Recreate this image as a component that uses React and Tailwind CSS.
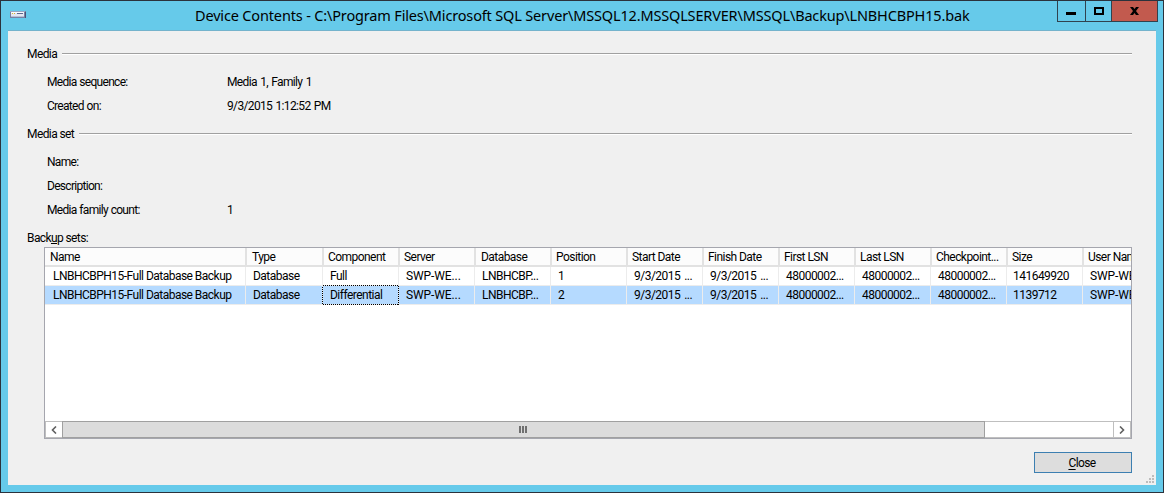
const columns = [
  { name: 'Name', width: 'w-[201px]', header: 'w-[202px] pl-[5px]', cell: 'pl-2' },
  { name: 'Type', width: 'w-[77px]', header: 'w-[77px] pl-[5px]', cell: 'pl-[7px]' },
  { name: 'Component', width: 'w-[76px]', header: 'w-[76px] pl-[4px]', cell: 'pl-[7px]' },
  { name: 'Server', width: 'w-[76px]', header: 'w-[76px] pl-[4px]', cell: 'pl-[7px] tracking-[-0.1px]' },
  { name: 'Database', width: 'w-[76px]', header: 'w-[76px] pl-[5px]', cell: 'pl-[7px]' },
  { name: 'Position', width: 'w-[76px]', header: 'w-[76px] pl-[4px]', cell: 'pl-[7px]' },
  { name: 'Start Date', width: 'w-[76px]', header: 'w-[76px] pl-[4px]', cell: 'pl-[7px] [word-spacing:1.5px]' },
  { name: 'Finish Date', width: 'w-[76px]', header: 'w-[76px] pl-[4px]', cell: 'pl-[7px] [word-spacing:1.5px]' },
  { name: 'First LSN', width: 'w-[76px]', header: 'w-[76px] pl-[4px]', cell: 'pl-[7px]' },
  { name: 'Last LSN', width: 'w-[76px]', header: 'w-[76px] pl-[4px]', cell: 'pl-[7px]' },
  { name: 'Checkpoint...', width: 'w-[76px]', header: 'w-[76px] pl-[4px]', cell: 'pl-[7px]' },
  { name: 'Size', width: 'w-[76px]', header: 'w-[76px] pl-[4px]', cell: 'pl-[6px]' },
  { name: 'User Name', width: 'w-[76px]', header: 'w-[76px] pl-[4px]', cell: 'pl-[7px] tracking-[-0.1px]' },
];

const rows = [
  ['LNBHCBPH15-Full Database Backup', 'Database', 'Full', 'SWP-WE...', 'LNBHCBP...', '1', '9/3/2015 ...', '9/3/2015 ...', '48000002...', '48000002...', '48000002...', '141649920', 'SWP-WEB'],
  ['LNBHCBPH15-Full Database Backup', 'Database', 'Differential', 'SWP-WE...', 'LNBHCBP...', '2', '9/3/2015 ...', '9/3/2015 ...', '48000002...', '48000002...', '48000002...', '1139712', 'SWP-WEB'],
];

function Section({ title }) {
  return (
    <div className="flex h-4 items-center">
      <span className="pr-[5px]">{title}</span>
      <div className="-mt-px h-[2px] flex-1 border-t border-[#a0a0a0] bg-white" />
    </div>
  );
}

function Field({ label, value }) {
  return (
    <div className="flex h-6 items-center pl-5">
      <span className="w-[180px] tracking-[-0.7px] [word-spacing:0.5px]">{label}</span>
      <span className="tracking-[-0.65px] [word-spacing:1px]">{value}</span>
    </div>
  );
}

function TitleBar() {
  return (
    <div className="flex h-[29px] shrink-0 items-start">
      <div className="w-[194px] pl-[9px] pt-[10px]">
        <svg width="16" height="7" viewBox="0 0 16 7" shapeRendering="crispEdges" className="block">
          <rect x="0" y="0" width="16" height="7" fill="#7781a3" />
          <rect x="0" y="0" width="15" height="1" fill="#9aa6c2" />
          <rect x="1" y="1" width="13" height="4" fill="#e3e7f1" />
          <rect x="1" y="1" width="13" height="1" fill="#f9fafd" />
          <rect x="2" y="2" width="1" height="1" fill="#d8b531" />
          <rect x="4" y="2" width="1" height="1" fill="#d8b531" />
          <rect x="7" y="2" width="6" height="1" fill="#5b678f" />
          <rect x="1" y="5" width="13" height="1" fill="#b9c1d7" />
          <rect x="15" y="1" width="1" height="6" fill="#4a5377" />
        </svg>
      </div>
      <h1 className="h-[29px] flex-1 whitespace-nowrap font-['Noto_Sans','Open_Sans',sans-serif] text-[14.5px] leading-[28px] tracking-[-0.16px]">
        Device Contents - C:\Program Files\Microsoft SQL Server\MSSQL12.MSSQLSERVER\MSSQL\Backup\LNBHCBPH15.bak
      </h1>
      <div className="mr-[5px] flex h-[21px] w-[101px] border-x border-b border-[#30424e]">
        <div className="w-[28px] border-r border-[#30424e] pl-2 pt-[11px]">
          <div className="h-[3px] w-[10px] bg-black" />
        </div>
        <div className="w-[26px] border-r border-[#30424e] pl-2 pt-[6px]">
          <div className="h-2 w-[10px] border-2 border-black" />
        </div>
        <div className="flex flex-1 justify-center bg-[#c25a4e] pt-[6px]">
          <svg width="9" height="8" viewBox="0 0 9 8" className="block">
            <path d="M0 0h3l1.500 2L6 0h3L6 4l3 4H6L4.500 6 3 8H0l3-4z" />
          </svg>
        </div>
      </div>
    </div>
  );
}

function BackupTable() {
  return (
    <div className="ml-[17px] flex h-[192px] w-[1088px] flex-col border border-[#a5a6ae] bg-white">
      <div className="flex-1 overflow-hidden">
        <div className="flex h-[19px] w-[1115px] border-b-2 border-[#e2e2e2] bg-[#fcfcfc] tracking-[-0.55px]">
          {columns.map((c) => (
            <div key={c.name} className={`${c.header} shrink-0 whitespace-nowrap border-r-2 border-[#e2e2e2] leading-[18px]`}>
              {c.name}
            </div>
          ))}
        </div>
        {rows.map((row, r) => (
          <div key={r} className={`flex h-[19px] w-[1114px] tracking-[-0.52px] ${r === 1 ? 'bg-[#b5daff]' : 'bg-white'}`}>
            {row.map((cell, i) => (
              <div
                key={i}
                className={`${columns[i].width} ${columns[i].cell} relative shrink-0 whitespace-nowrap border-b border-r border-[#ececec] leading-[18px]`}
              >
                {cell}
                {r === 1 && i === 2 && (
                  <svg className="absolute -left-px -top-px" width="77" height="20" shapeRendering="crispEdges">
                    <rect x="0.5" y="0.5" width="76" height="19" fill="none" stroke="#000" strokeDasharray="1 1" />
                  </svg>
                )}
              </div>
            ))}
          </div>
        ))}
      </div>
      <div className="flex h-[17px] border border-[#bfbfbf]">
        <div className="flex w-4 items-center justify-center pr-px">
          <svg width="6" height="8" viewBox="0 0 6 8" fill="none" stroke="#606060" strokeWidth="1.6">
            <path d="M5 .5 1.500 4 5 7.500" />
          </svg>
        </div>
        <div className="-my-px flex w-[923px] items-center justify-center gap-px border border-[#a0a0a0] bg-[#dcdcdc] pr-[2px]">
          <div className="h-[7px] w-[2px] bg-[#707070]" />
          <div className="h-[7px] w-[2px] bg-[#707070]" />
          <div className="h-[7px] w-[2px] bg-[#707070]" />
        </div>
        <div className="flex-1" />
        <div className="flex w-[17px] items-center justify-center border-l border-[#bfbfbf]">
          <svg width="6" height="8" viewBox="0 0 6 8" fill="none" stroke="#606060" strokeWidth="1.6">
            <path d="M1 .5 4.500 4 1 7.500" />
          </svg>
        </div>
      </div>
    </div>
  );
}

export default function App() {
  return (
    <div className="flex h-[493px] w-[1164px] flex-col border border-[#2b323c] bg-[#66caea] font-[Roboto,sans-serif] text-[12px] leading-4 tracking-[-0.6px] text-black">
      <TitleBar />
      <div className="mx-[7px] flex h-[455px] flex-col border-t border-[#74b3cc] bg-[#f0f0f0] pl-[19px]">
        <div className="w-[1105px] pt-[15px]">
          <Section title="Media" />
          <div className="pt-2">
            <Field label="Media sequence:" value="Media 1, Family 1" />
            <Field label="Created on:" value="9/3/2015 1:12:52 PM" />
          </div>
          <div className="pt-2">
            <Section title="Media set" />
          </div>
          <div className="pt-2">
            <Field label="Name:" />
            <Field label="Description:" />
            <Field label="Media family count:" value="1" />
          </div>
          <div className="h-[25px] pt-2">
            Back<span className="underline underline-offset-1">u</span>p sets:
          </div>
          <BackupTable />
          <div className="flex justify-end pt-[13px]">
            <button className="h-[21px] w-[98px] border border-[#3c7fb1] bg-[#dddddd] pr-[2px] leading-[20px] tracking-[-0.6px]">
              <span className="underline underline-offset-2">C</span>lose
            </button>
          </div>
        </div>
        <div className="flex justify-end pr-[2px] pt-[2px]">
          <svg width="8" height="8" viewBox="0 0 8 8" fill="#bcbcbc" shapeRendering="crispEdges">
            <path d="M6 0h2v2H6zM6 3h2v2H6zM3 3h2v2H3zM6 6h2v2H6zM3 6h2v2H3zM0 6h2v2H0z" />
          </svg>
        </div>
      </div>
    </div>
  );
}
